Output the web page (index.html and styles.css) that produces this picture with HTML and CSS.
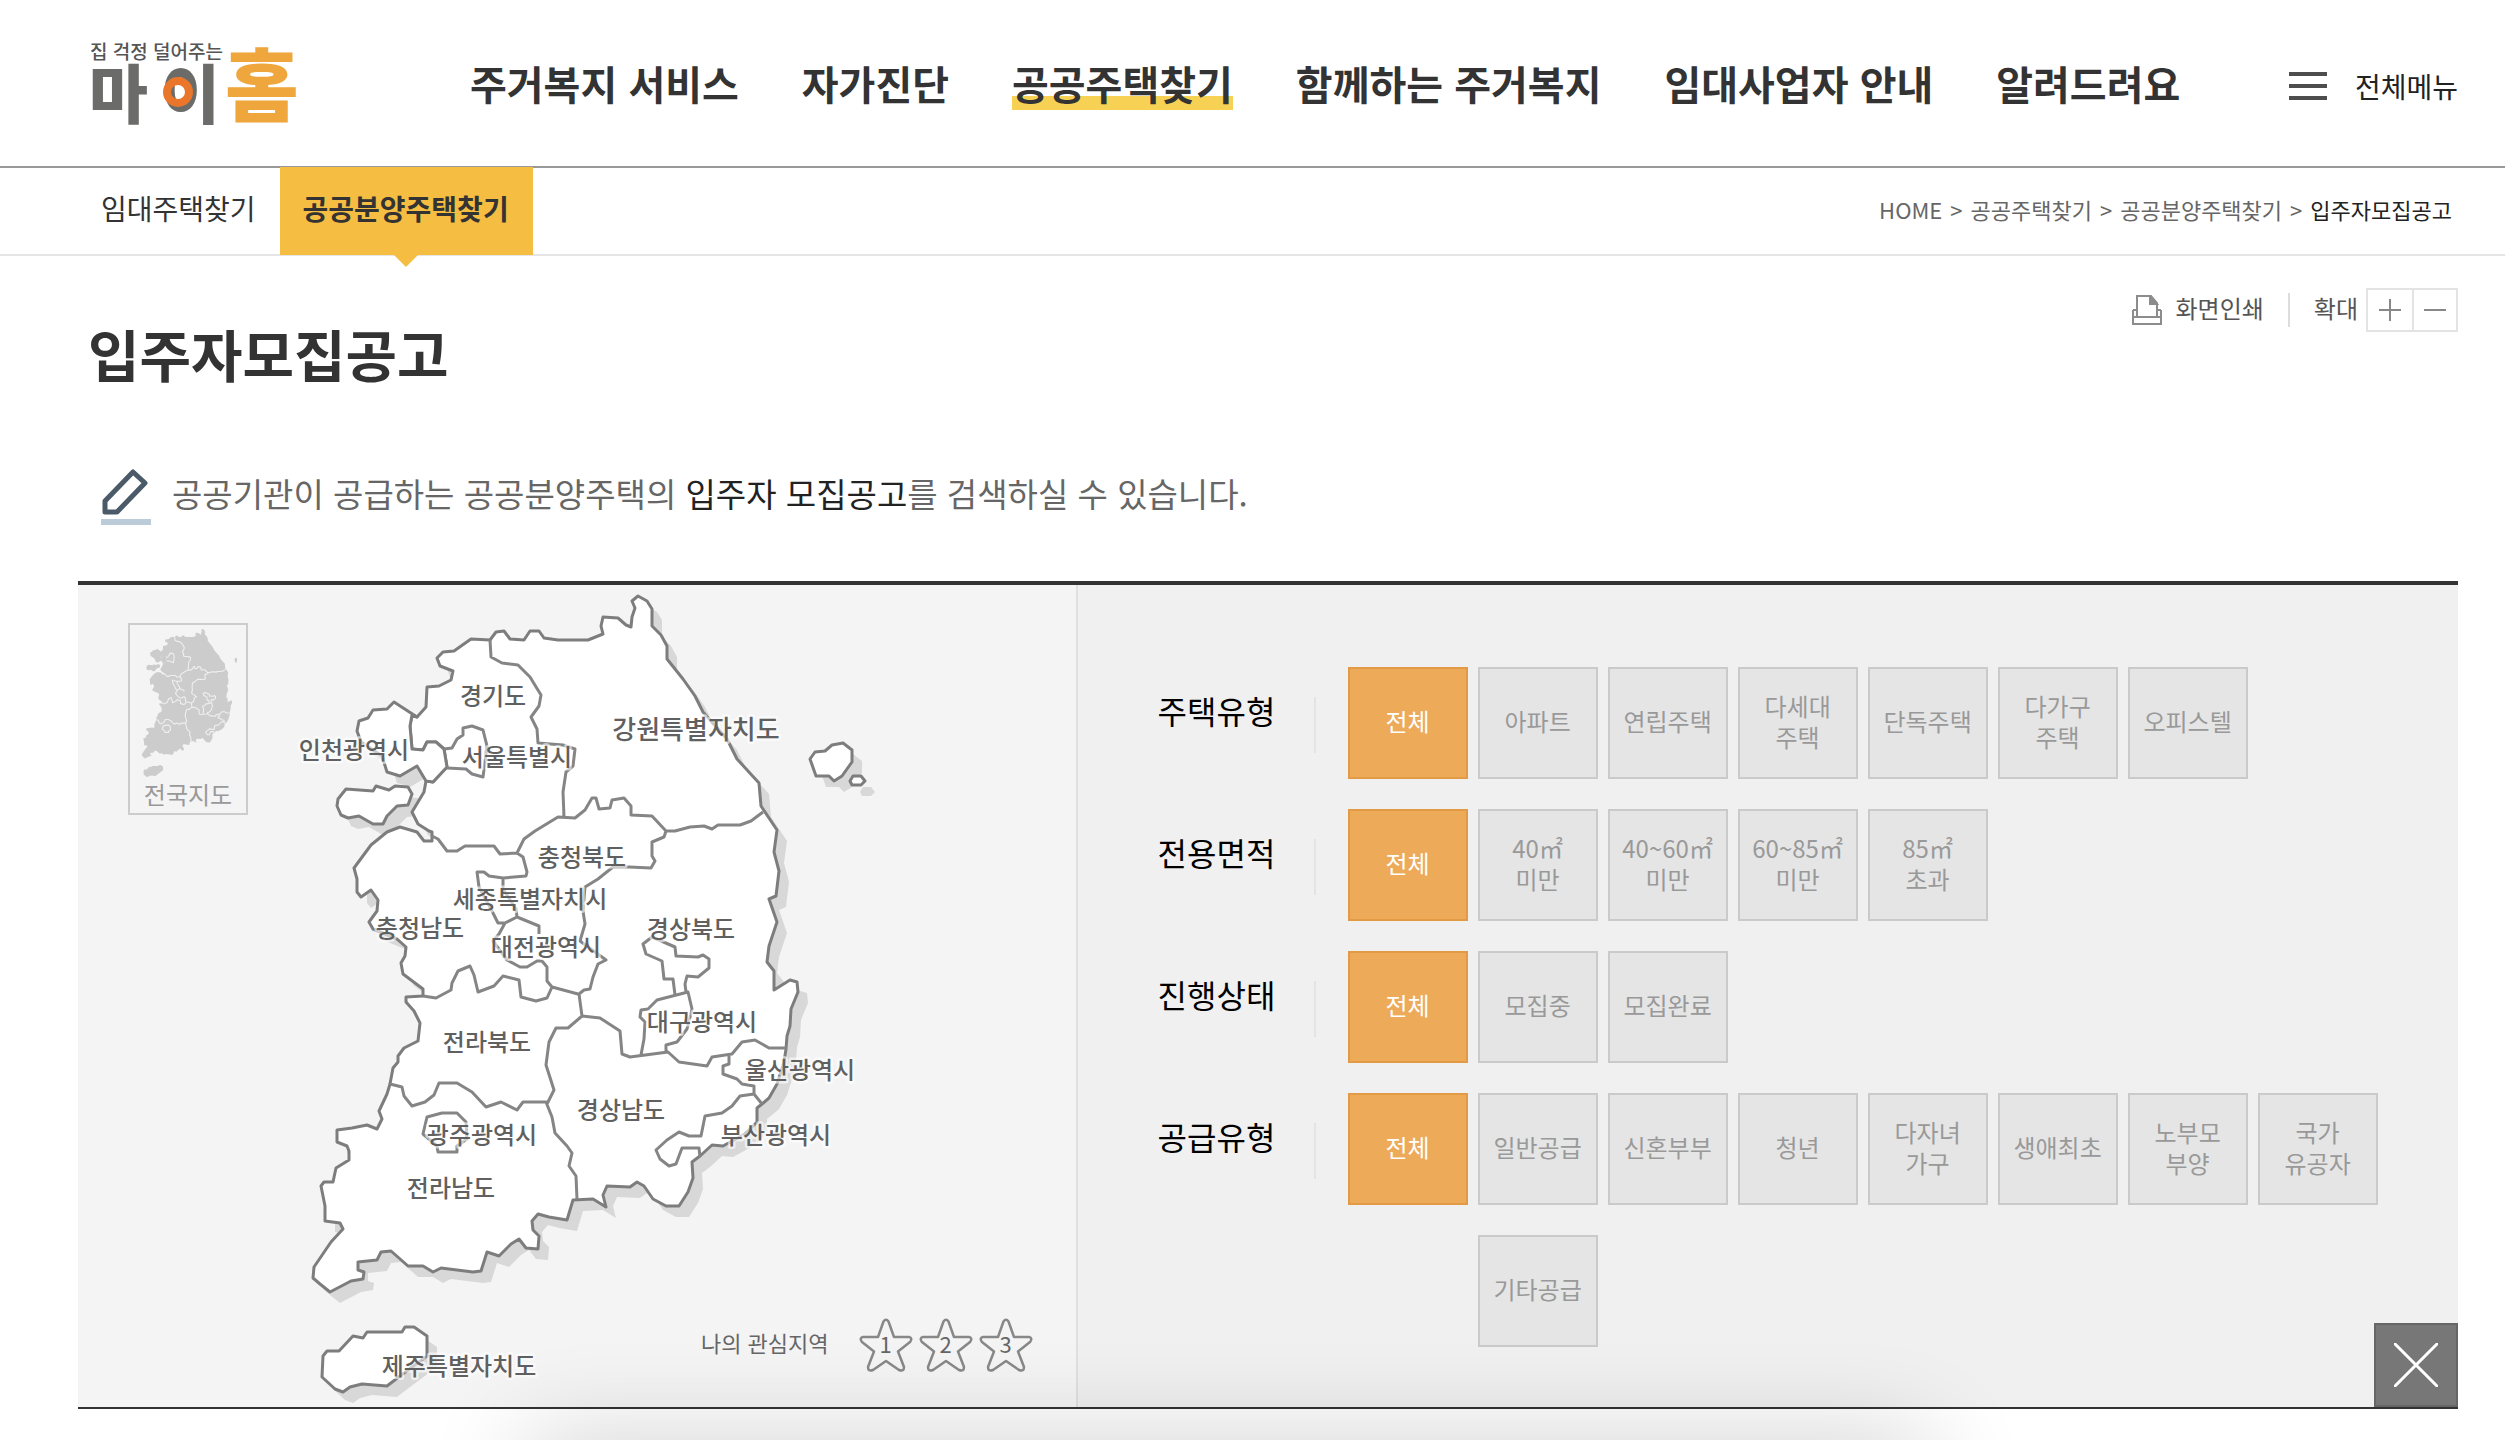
FILE: index.html
```html
<!DOCTYPE html>
<html lang="ko">
<head>
<meta charset="utf-8">
<meta name="viewport" content="width=device-width, initial-scale=1">
<title>입주자모집공고 | 마이홈</title>
<link rel="stylesheet" href="styles.css">
</head>
<body>
<header class="header">
  <a class="logo" href="#" aria-label="집 걱정 덜어주는 마이홈">
    <svg width="224" height="110" viewBox="0 0 224 110">
      <text class="logo-tag" x="12" y="31">집 걱정 덜어주는</text>
      <text class="logo-my" x="11" y="90">마</text>
      <text class="logo-my" x="83" y="90">이</text>
      <circle cx="100" cy="64" r="11" fill="none" stroke="#e9762b" stroke-width="8"/>
      <text class="logo-home" x="147" y="87">홈</text>
    </svg>
  </a>
  <nav class="gnb" aria-label="주메뉴">
    <a href="#">주거복지 서비스</a>
    <a href="#">자가진단</a>
    <a class="is-current" href="#">공공주택찾기</a>
    <a href="#">함께하는 주거복지</a>
    <a href="#">임대사업자 안내</a>
    <a href="#">알려드려요</a>
  </nav>
  <button class="all-menu" type="button">
    <svg width="38" height="28" viewBox="0 0 38 28"><path d="M0 2h38M0 14h38M0 26h38" stroke="#4d4d4d" stroke-width="4"/></svg>
    전체메뉴
  </button>
</header>

<div class="subbar">
  <nav class="tabs" aria-label="하위메뉴">
    <a href="#">임대주택찾기</a>
    <a class="is-active" href="#">공공분양주택찾기</a>
  </nav>
  <nav class="breadcrumb" aria-label="현재 위치">
    <a href="#">HOME</a><span>&gt;</span><a href="#">공공주택찾기</a><span>&gt;</span><a href="#">공공분양주택찾기</a><span>&gt;</span><strong>입주자모집공고</strong>
  </nav>
</div>

<main class="content">
  <div class="tools">
    <button class="print" type="button">
      <svg width="30" height="30" viewBox="0 0 30 30" fill="none" stroke="#8c8c8c" stroke-width="2"><path d="M5 21V1h14l6 7v13M1 15v14h28V15M1 22h28M1 15h4M25 15h4"/><path d="M18 1v8h7z" fill="#8c8c8c"/></svg>
      <span class="tools-text">화면인쇄</span>
    </button>
    <span class="tools-line"></span>
    <span class="tools-text">확대</span>
    <div class="zoom">
      <button type="button" aria-label="확대"><svg width="24" height="24" viewBox="0 0 24 24"><path d="M12 1v22M1 12h22" stroke="#888" stroke-width="2"/></svg></button>
      <button type="button" aria-label="축소"><svg width="24" height="24" viewBox="0 0 24 24"><path d="M1 12h22" stroke="#888" stroke-width="2"/></svg></button>
    </div>
  </div>

  <h1 class="title">입주자모집공고</h1>

  <p class="intro">
    <svg width="52" height="58" viewBox="0 0 52 58"><path d="M5 44V33L33 4l12 11-28 29z" fill="none" stroke="#4b5a69" stroke-width="5" stroke-linejoin="round"/><path d="M1 54h50" stroke="#bccbd8" stroke-width="6"/></svg>
    <span>공공기관이 공급하는 공공분양주택의 <strong>입주자 모집공고</strong>를 검색하실 수 있습니다.</span>
  </p>

  <section class="search">
    <div class="region">
      <button class="nation" type="button">
        <svg width="98" height="150" viewBox="306 592 510 806" aria-hidden="true">
          <use href="#land" class="mini"/><use href="#isles" class="mini"/><use href="#borders" class="mini-lines"/>
        </svg>
        전국지도
      </button>

      <svg class="map" width="600" height="822" viewBox="290 586 600 822" role="img" aria-label="지역 선택 지도">
        <defs>
          <path id="land" d="M417 718L426 708 427 688 439 687 451 681 453 672 440 667 437 659 443 653 454 652 471 640 490 641 496 633 504 632 510 640 524 641 530 632 539 632 544 639 558 641 588 641 603 635 601 627 603 618 618 619 626 626 631 628 632 618 635 609 632 602 638 597 647 602 652 610 652 627 661 636 667 647 667 660 683 680 695 697 703 713 727 740 737 760 759 784 761 807 777 831 774 853 779 872 776 897 769 900 777 923 769 947 767 963 774 972 774 991 790 981 797 983 798 993 791 1010 790 1027 787 1037 786 1050 784 1063 777 1085 769 1099 762 1105 757 1109 757 1123 745 1135 723 1147 712 1146 700 1157 692 1163 693 1179 688 1193 679 1207 666 1207 653 1200 644 1187 637 1183 630 1188 607 1187 603 1196 606 1208 593 1200 573 1201 567 1221 549 1218 538 1215 532 1222 533 1231 539 1237 538 1250 526 1249 519 1240 511 1245 499 1257 487 1253 481 1272 473 1273 441 1269 433 1273 423 1267 408 1267 391 1252 381 1253 377 1261 358 1263 358 1271 364 1273 363 1280 351 1282 330 1293 320 1285 313 1279 314 1268 331 1243 343 1230 340 1224 325 1222 325 1207 321 1187 324 1183 333 1183 336 1169 349 1161 349 1152 347 1147 337 1143 337 1131 352 1129 367 1126 377 1130 382 1120 379 1112 387 1095 390 1085 393 1069 398 1063 398 1057 404 1049 418 1042 420 1024 414 1012 406 1003 406 998 423 997 423 990 403 975 401 964 405 957 406 948 397 940 373 930 369 923 377 912 378 901 371 891 361 898 357 893 357 880 354 869 371 846 387 833 400 828 417 833 424 842 432 842 432 833 429 832 418 825 412 813 424 793 426 782 433 783 447 768 444 750 436 743 427 743 423 751 412 750 410 727 412 716z"/>
          <path id="isles" d="M417 718L394 703 387 710 373 711 368 719 359 722 357 732 361 743 382 757 387 773 400 777 417 767 426 782 433 783 447 768 444 750 436 743 427 743 423 751 412 750 410 727 412 716zM338 800L346 790 373 792 376 787 389 791 395 787 408 788 412 795 408 806 397 807 387 817 383 825 373 825 359 817 348 819 341 816 337 807zM815 753L825 752 832 746 843 744 852 751 852 763 842 777 834 782 829 777 816 777 810 760zM853 777h8l4 5-4 4h-9l-2-4zM323 1357L327 1352 339 1352 353 1337 363 1339 367 1333 402 1333 405 1328 414 1328 427 1337 427 1357 400 1377 387 1387 362 1385 350 1388 343 1393 335 1390 322 1378z"/>
          <path id="borders" d="M490 641L491 658 502 664 518 666 530 678 541 696 539 707 531 718 537 730 538 744 563 746 575 750 573 767 566 773 563 793 564 818M432 837L438 840 447 852 457 852 465 847 494 847 500 855 517 854 524 840 535 832 558 818 575 819 585 811 592 799 596 799 599 810 610 809 612 801 624 799 631 807 631 816 652 817 666 832 675 832 690 828 704 827 712 830 718 826 740 826 751 822 763 813M444 750L452 749 457 740 463 736 463 729 472 727 483 731 487 747 483 778 472 775 466 770 447 769M517 854L523 858 527 873 526 877 503 879 489 877 484 873 477 873 479 888 492 912 498 924 505 924 517 918 516 910 503 890 503 879M505 924L499 935 493 942 507 961 520 968 527 968 537 962 542 962 547 968 547 982 552 988 578 995M517 918L539 927 539 935M666 832L664 838 652 843 652 857 655 862 651 869 629 868 613 868 598 880 585 888 583 912 585 925 580 942 606 961 598 965 593 978 590 990 584 991 579 995 582 1017M423 997L436 999 451 991 452 984 458 972 470 967 474 976 478 993 494 987 503 977 519 981 521 998 536 1002 547 999 552 988M582 1017L568 1029 556 1029 549 1043 546 1066 554 1091 547 1105M390 1085L402 1088 404 1097 412 1107 425 1103 434 1096 439 1084 457 1084 472 1093 486 1108 501 1103 517 1111 523 1103 546 1103 552 1118 555 1134 567 1147 572 1154 569 1167 576 1177 577 1200M423 1135L427 1118 442 1114 457 1114 466 1123 467 1140 457 1147 457 1153 438 1153 437 1147zM582 1017L600 1019 620 1032 622 1055 630 1058 668 1053 679 1063 707 1067 712 1058 732 1055 742 1043 755 1041 769 1049 787 1049M641 1056L644 1040 645 1023 640 1018 641 1011 648 1010 657 1001 688 993 692 1010 687 1030 677 1043 666 1046 666 1052M675 996L673 980 664 980 662 962 646 955 643 945 652 938 675 948 676 957 698 958 703 956 709 960 709 969 698 978 687 977 685 985 686 993M729 1056L729 1065 723 1067 723 1075 737 1080 742 1085 754 1087 754 1095 762 1105M754 1095L740 1097 732 1107 722 1114 705 1117 701 1137 689 1137 679 1133 667 1141 656 1151 660 1160 669 1167 676 1165 682 1149 699 1149 700 1158"/>
        </defs>
        <g class="map-shadow" transform="translate(10 11)"><use href="#land"/><use href="#isles"/></g>
        <g class="map-land"><use href="#land"/><use href="#isles"/></g>
        <use class="map-borders" href="#borders"/>
        <g class="map-labels">
          <text x="493" y="706">경기도</text>
          <text x="354" y="760">인천광역시</text>
          <text x="517" y="767">서울특별시</text>
          <text class="wide" x="696" y="740">강원특별자치도</text>
          <text x="582" y="867">충청북도</text>
          <text x="530" y="909">세종특별자치시</text>
          <text x="420" y="938">충청남도</text>
          <text x="546" y="957">대전광역시</text>
          <text x="691" y="939">경상북도</text>
          <text x="702" y="1032">대구광역시</text>
          <text x="487" y="1052">전라북도</text>
          <text x="800" y="1080">울산광역시</text>
          <text x="621" y="1120">경상남도</text>
          <text x="776" y="1145">부산광역시</text>
          <text x="482" y="1145">광주광역시</text>
          <text x="451" y="1198">전라남도</text>
          <text x="459" y="1376">제주특별자치도</text>
        </g>
      </svg>

      <div class="favorites">
        <span>나의 관심지역</span>
        <button type="button"><svg viewBox="0 0 54 54"><use href="#star"/></svg><span>1</span></button>
        <button type="button"><svg viewBox="0 0 54 54"><use href="#star"/></svg><span>2</span></button>
        <button type="button"><svg viewBox="0 0 54 54"><path id="star" d="M24.500 3.500Q27 0 29.500 3.500L35 19 50 19Q54 20 51 24L39 33.500 45 49Q45 54 40 52L27 43 14 52Q9 54 9 49L15 33.500 3 24Q0 20 4 19L19 19z" fill="none" stroke="#888" stroke-width="2.500" stroke-linejoin="round"/></svg><span>3</span></button>
      </div>
    </div>

    <form class="filters">
      <div class="filter" role="group" aria-labelledby="f1">
        <h2 id="f1">주택유형</h2>
        <div class="options">
          <button class="on" type="button" aria-pressed="true">전체</button>
          <button type="button">아파트</button>
          <button type="button">연립주택</button>
          <button type="button">다세대<br>주택</button>
          <button type="button">단독주택</button>
          <button type="button">다가구<br>주택</button>
          <button type="button">오피스텔</button>
        </div>
      </div>
      <div class="filter" role="group" aria-labelledby="f2">
        <h2 id="f2">전용면적</h2>
        <div class="options">
          <button class="on" type="button" aria-pressed="true">전체</button>
          <button type="button">40㎡<br>미만</button>
          <button type="button">40~60㎡<br>미만</button>
          <button type="button">60~85㎡<br>미만</button>
          <button type="button">85㎡<br>초과</button>
        </div>
      </div>
      <div class="filter" role="group" aria-labelledby="f3">
        <h2 id="f3">진행상태</h2>
        <div class="options">
          <button class="on" type="button" aria-pressed="true">전체</button>
          <button type="button">모집중</button>
          <button type="button">모집완료</button>
        </div>
      </div>
      <div class="filter" role="group" aria-labelledby="f4">
        <h2 id="f4">공급유형</h2>
        <div class="options">
          <button class="on" type="button" aria-pressed="true">전체</button>
          <button type="button">일반공급</button>
          <button type="button">신혼부부</button>
          <button type="button">청년</button>
          <button type="button">다자녀<br>가구</button>
          <button type="button">생애최초</button>
          <button type="button">노부모<br>부양</button>
          <button type="button">국가<br>유공자</button>
          <button class="second" type="button">기타공급</button>
        </div>
      </div>
      <button class="close" type="button" aria-label="닫기"><svg width="44" height="44" viewBox="0 0 44 44"><path d="M1 1l42 42M43 1L1 43" stroke="#fff" stroke-width="3" stroke-linecap="round"/></svg></button>
    </form>
  </section>
</main>
<div class="sheet" aria-hidden="true"></div>
</body>
</html>
```

FILE: styles.css
```css
* { box-sizing: border-box; }
html, body { height: 100%; overflow: hidden; }
body {
  margin: 0;
  background: #fff;
  color: #333;
  font-family: "Noto Sans CJK KR", "Noto Sans", sans-serif;
  font-size: 24px;
}
a { color: inherit; text-decoration: none; }
button {
  margin: 0;
  padding: 0;
  border: 0;
  background: none;
  color: inherit;
  font: inherit;
  cursor: pointer;
}
svg { display: block; flex: none; }

/* header */
.header {
  display: flex;
  align-items: center;
  height: 168px;
  padding: 0 47px 0 78px;
  border-bottom: 2px solid #999;
}
.logo { margin-right: 168px; }
.logo-tag { font-size: 19px; font-weight: 500; fill: #555; }
.logo-my { font-size: 64px; font-weight: 900; fill: #6b6b69; }
.logo-home { font-size: 80px; font-weight: 900; fill: #efa63c; }
.gnb { display: flex; gap: 63px; font-size: 40px; font-weight: 700; line-height: 54px; white-space: nowrap; }
.gnb .is-current { background: linear-gradient(transparent 40px, #f7d154 40px); }
.all-menu { display: flex; align-items: center; gap: 28px; margin-left: auto; padding-top: 5px; font-size: 28px; color: #222; }

/* tabs and breadcrumb */
.subbar {
  display: flex;
  justify-content: space-between;
  align-items: center;
  height: 88px;
  padding: 0 53px 0 78px;
  border-bottom: 2px solid #e5e5e5;
}
.tabs { display: flex; height: 88px; font-size: 28px; line-height: 82px; }
.tabs a { position: relative; height: 88px; padding: 0 24px 0 23px; }
.tabs .is-active { background: #f5bd41; font-weight: 700; }
.tabs .is-active::after {
  content: "";
  position: absolute;
  top: 100%;
  left: 50%;
  margin-left: -12px;
  border: 12px solid transparent;
  border-top-color: #f5bd41;
  border-bottom: 0;
}
.breadcrumb { display: flex; gap: 8px; padding-bottom: 4px; font-size: 22px; color: #666; }
.breadcrumb strong { font-weight: 400; color: #222; }

/* content */
.content { padding: 32px 47px 0 78px; }
.tools { display: flex; align-items: center; justify-content: flex-end; height: 44px; color: #555; }
.tools-text { padding-bottom: 6px; }
.print { display: flex; align-items: center; gap: 14px; }
.tools-line { width: 2px; height: 34px; margin: 0 24px; background: #ddd; }
.zoom { display: flex; margin-left: 8px; border: 2px solid #e3e3e3; }
.zoom button { display: grid; place-items: center; width: 44px; height: 40px; }
.zoom button + button { border-left: 2px solid #e3e3e3; }
.title { margin: 0; padding-left: 10px; font-size: 56px; font-weight: 700; line-height: 42px; }
.intro {
  display: flex;
  align-items: center;
  gap: 20px;
  margin: 0;
  padding: 94px 0 55px 22px;
  font-size: 33px;
  line-height: 48px;
  color: #666;
}
.intro span { padding-bottom: 8px; }
.intro strong { font-weight: 400; color: #222; }

.search {
  display: grid;
  grid-template-columns: 42fr 58fr;
  border-top: 4px solid #333;
  border-bottom: 2px solid #333;
}
.region {
  position: relative;
  display: flex;
  align-items: flex-start;
  padding-left: 50px;
  border-right: 2px solid #e0e0e0;
  background: #f4f4f4;
}
.nation {
  width: 120px;
  height: 192px;
  margin: 38px 42px 0 0;
  border: 2px solid #ccc;
  color: #999;
  line-height: 32px;
}
.nation svg { margin: 0 auto; }
.mini { fill: #ccc; }
.mini-lines { fill: none; stroke: #eee; stroke-width: 6; }
.map-shadow { fill: #d8d8d8; }
.map-land { fill: #fff; stroke: #7d7d7d; stroke-width: 3; stroke-linejoin: round; }
.map-borders { fill: none; stroke: #858585; stroke-width: 3; stroke-linejoin: round; }
.map-labels {
  font-size: 24px;
  font-weight: 500;
  text-anchor: middle;
  fill: #606060;
  stroke: #fff;
  stroke-opacity: .6;
  stroke-width: 5;
  stroke-linejoin: round;
  paint-order: stroke;
}
.map-labels .wide { font-size: 26px; }
.favorites {
  position: absolute;
  right: 43px;
  bottom: 35px;
  display: flex;
  align-items: center;
  gap: 6px;
  font-size: 22px;
  color: #666;
}
.favorites > span { margin-right: 24px; padding-bottom: 6px; }
.favorites button { display: grid; place-items: center; width: 54px; height: 54px; line-height: 50px; }
.favorites button > * { grid-area: 1 / 1; }
.favorites button span { padding-bottom: 4px; }
.favorites svg { width: 54px; height: 54px; }

.filters {
  position: relative;
  display: flex;
  flex-direction: column;
  gap: 30px;
  padding: 82px 0 60px 80px;
  background: #f0f0f0;
}
.filter { display: flex; align-items: flex-start; }
.filter h2 {
  width: 158px;
  height: 56px;
  margin: 30px 32px 0 0;
  border-right: 2px solid #e4e4e4;
  color: #000;
  font-size: 32px;
  font-weight: 400;
  line-height: 26px;
}
.options { flex: 1; display: grid; grid-template-columns: repeat(auto-fill, 120px); gap: 30px 10px; }
.options button {
  height: 112px;
  padding-bottom: 5px;
  border: 2px solid #cacaca;
  background: #e5e5e5;
  color: #999;
  line-height: 31px;
}
.options .on { border-color: #e39a45; background: #edaa59; color: #fff; }
.options .second { grid-column: 2; }
.close {
  position: absolute;
  right: 0;
  bottom: 0;
  display: grid;
  place-items: center;
  width: 84px;
  height: 84px;
  border: 2px solid #666;
  background: #777;
}

.sheet {
  position: fixed;
  left: 21%;
  right: 23%;
  bottom: -80px;
  height: 80px;
  box-shadow: 0 0 100px rgba(0, 0, 0, .2);
}
```
